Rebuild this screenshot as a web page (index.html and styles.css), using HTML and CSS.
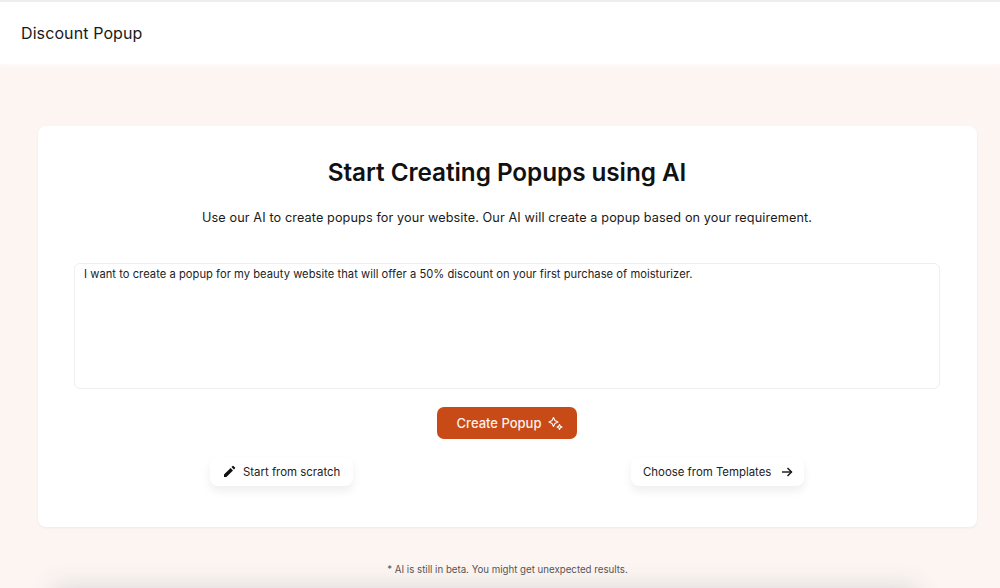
FILE: index.html
```html
<!DOCTYPE html>
<html lang="en">
<head>
<meta charset="utf-8">
<title>Discount Popup</title>
<link rel="stylesheet" href="styles.css">
</head>
<body>
<header class="topbar"><span class="topbar-title">Discount Popup</span></header>
<main class="page">
  <section class="card">
    <h1 class="card-title">Start Creating Popups using AI</h1>
    <p class="card-sub">Use our AI to create popups for your website. Our AI will create a popup based on your requirement.</p>
    <div class="prompt">I want to create a popup for my beauty website that will offer a 50% discount on your first purchase of moisturizer.</div>
    <button class="create" type="button">Create Popup
      <svg class="sparkle" width="15" height="15" viewBox="0 0 15 15" fill="none" stroke="#fff" stroke-width="1.1" stroke-linejoin="round"><path d="M5.5 1.5 L7 4.5 L10 6 L7 7.5 L5.5 10.5 L4 7.5 L1 6 L4 4.5 Z"/><path d="M11.5 8.5 L12.3 10.2 L14 11 L12.3 11.8 L11.5 13.5 L10.7 11.8 L9 11 L10.7 10.2 Z"/></svg>
    </button>
    <div class="alts">
      <button class="alt alt-left" type="button">
        <svg width="13" height="13" viewBox="0 0 13 13" fill="#111"><path d="M1 9.6 L1 12 L3.4 12 L10 5.4 L7.6 3 Z"/><path d="M8.5 2.1 L10.9 4.5 L12 3.4 Q12.4 3 12 2.5 L10.5 1 Q10 .6 9.6 1 Z"/></svg>
        Start from scratch
      </button>
      <button class="alt alt-right" type="button">Choose from Templates
        <svg class="arrow" width="12" height="12" viewBox="0 0 12 12" fill="none" stroke="#111" stroke-width="1.4"><path d="M1 6 H10.5"/><path d="M6.5 2 L10.5 6 L6.5 10"/></svg>
      </button>
    </div>
  </section>
  <p class="note">* AI is still in beta. You might get unexpected results.</p>
  <div class="dock"></div>
</main>
</body>
</html>
```

FILE: styles.css
```css
* { box-sizing: border-box; }
html { overflow: hidden; height: 588px; }
body {
  margin: 0;
  height: 588px;
  overflow: hidden;
  background: #fdf5f2;
  font-family: Inter, "Open Sans", sans-serif;
  color: #111;
}
.topbar {
  height: 64px;
  background: #fff;
  border-top: 2px solid #eeeeee;
  padding: 0 21px;
  display: flex;
  align-items: center;
  box-shadow: 0 1px 4px rgba(255,255,255,.9);
}
.topbar-title { font-size: 16px; font-weight: 400; color: #1a1a1a; letter-spacing: .1px; }
.page { padding: 62px 23px 0 38px; position: relative; height: 524px; overflow: hidden; }
.card {
  background: #fff;
  border-radius: 8px;
  height: 401px;
  padding: 30px 37px 0 36px;
  display: flex;
  flex-direction: column;
  align-items: center;
  box-shadow: 0 1px 3px rgba(0,0,0,.05);
}
.card-title { margin: 0; font-size: 24.3px; line-height: 33px; font-weight: 600; color: #111; letter-spacing: -.05px; }
.card-sub { margin: 20px 0 0; font-size: 12.7px; line-height: 18px; color: #1a1a1a; letter-spacing: .1px; }
.prompt {
  margin-top: 36px;
  width: 100%;
  height: 126px;
  border: 1px solid #efefef;
  border-radius: 6px;
  padding: 2px 9px;
  font-size: 11.15px;
  line-height: 16px;
  color: #222;
  letter-spacing: .05px;
}
.create {
  margin-top: 18px;
  width: 140px;
  height: 32px;
  border: 0;
  border-radius: 7px;
  background: #c74a17;
  color: #fdf0ea;
  font: 500 13px Inter, "Open Sans", sans-serif;
  display: flex;
  align-items: center;
  justify-content: center;
  gap: 7px;
  padding: 0 0 0 6px;
}
.sparkle { flex: none; }
.alts {
  margin-top: 18px;
  width: 594px;
  display: flex;
  justify-content: space-between;
}
.alt {
  height: 29px;
  border: 0;
  border-radius: 8px;
  background: #fff;
  color: #222;
  font: 400 11.4px Inter, "Open Sans", sans-serif;
  display: flex;
  align-items: center;
  gap: 7px;
  box-shadow: 0 5px 10px rgba(0,0,0,.07);
}
.alt-left { width: 143px; padding-left: 13px; }
.alt-right { width: 173px; padding-left: 12px; }
.arrow { margin-left: 3px; }
.note {
  margin: 37px 0 0;
  text-align: center;
  font-size: 9.7px;
  line-height: 12px;
  color: #555;
  position: relative;
  z-index: 1;
}
.dock {
  position: absolute;
  left: 60px;
  right: 90px;
  top: 530px;
  height: 30px;
  background: #dddbda;
  box-shadow: 0 0 24px 8px #dddbda;
}
```
